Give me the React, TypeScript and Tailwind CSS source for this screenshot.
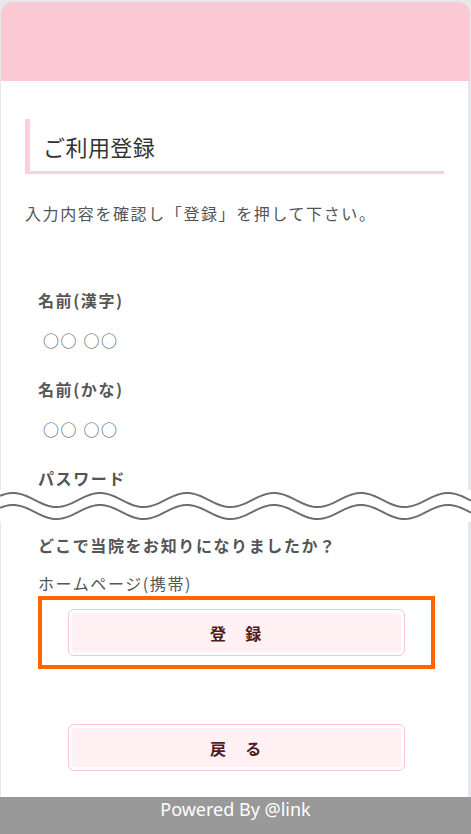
import React from 'react';

const JP = { fontFamily: '"Noto Sans CJK JP", "Noto Sans", sans-serif' };

function Wave() {
  const pts = (mid: number) => {
    const out: string[] = [];
    for (let x = 0; x <= 471; x += 3) {
      const y = mid - 7 * Math.cos((2 * Math.PI * (x - 13)) / 87);
      out.push(`${x},${y.toFixed(2)}`);
    }
    return out.join(' ');
  };
  return (
    <svg className="block w-[471px] h-[32px] bg-white" viewBox="0 0 471 32">
      <polyline points={pts(10)} fill="none" stroke="#6e6e6e" strokeWidth="2" />
      <polyline points={pts(22)} fill="none" stroke="#6e6e6e" strokeWidth="2" />
    </svg>
  );
}

function Field({ label, value, first }: { label: string; value: string; first?: boolean }) {
  return (
    <div className={first ? 'mt-[63px]' : 'mt-[25px]'}>
      <p className="text-[16px] leading-[24px] font-bold text-[#555555] tracking-[0.1em] pl-[13px]">{label}</p>
      <p className="mt-[16px] text-[16px] leading-[24px] text-[#555555] tracking-[0.1em] pl-[18px]">{value}</p>
    </div>
  );
}

function PinkButton({ label }: { label: string }) {
  return (
    <div className="w-[337px] mx-auto border border-[#f8c6d2] rounded-[6px] bg-white p-[3px]">
      <div className="h-[39px] rounded-[3px] bg-[#fff0f3] flex items-center justify-center">
        <span className="text-[16px] font-bold text-[#4f1b1b] tracking-[0.1em]">{label}</span>
      </div>
    </div>
  );
}

export default function App() {
  return (
    <div className="min-h-[834px] bg-[#e7e8ec] pt-[2px] flex flex-col" style={JP}>
      <div className="ml-[1px] w-[469px] h-[79px] bg-[#fbc9d4] rounded-t-[12px]" />

      <div className="ml-[1px] w-[467px] bg-white px-6 pt-[38px]">
        <div className="h-[55px] border-l-[5px] border-b-[3px] border-[#fbd0da] flex items-center pl-[13px] pt-[2px]">
          <h1 className="text-[22px] text-[#333333] tracking-[0.02em]">ご利用登録</h1>
        </div>
        <p className="mt-[27px] text-[16px] leading-[24px] text-[#555555] tracking-[0.1em]">
          入力内容を確認し「登録」を押して下さい。
        </p>

        <Field first label="名前(漢字)" value="○○ ○○" />
        <Field label="名前(かな)" value="○○ ○○" />
        <p className="mt-[25px] text-[16px] leading-[24px] font-bold text-[#555555] tracking-[0.1em] pl-[13px]">
          パスワード
        </p>
      </div>

      <Wave />

      <div className="ml-[1px] w-[467px] bg-white px-6 pt-[11px] pb-[26px] flex-1">
        <p className="text-[16px] leading-[24px] font-bold text-[#555555] tracking-[0.1em] pl-[13px]">
          どこで当院をお知りになりましたか？
        </p>
        <p className="mt-[14px] text-[16px] leading-[24px] text-[#555555] tracking-[0.1em] pl-[13px]">
          ホームページ(携帯)
        </p>

        <div className="mt-[1px] ml-[13px] w-[397px] border-4 border-[#ff6600] py-[9px]">
          <PinkButton label="登　録" />
        </div>

        <div className="mt-[55px] pl-[13px] w-[410px]">
          <PinkButton label="戻　る" />
        </div>
      </div>

      <footer className="w-full h-[37px] bg-[#999999] text-center">
        <span
          className="text-[18px] leading-[24px] text-white"
          style={{ fontFamily: '"Noto Sans", "Noto Sans CJK JP", sans-serif' }}
        >
          Powered By @link
        </span>
      </footer>
    </div>
  );
}
